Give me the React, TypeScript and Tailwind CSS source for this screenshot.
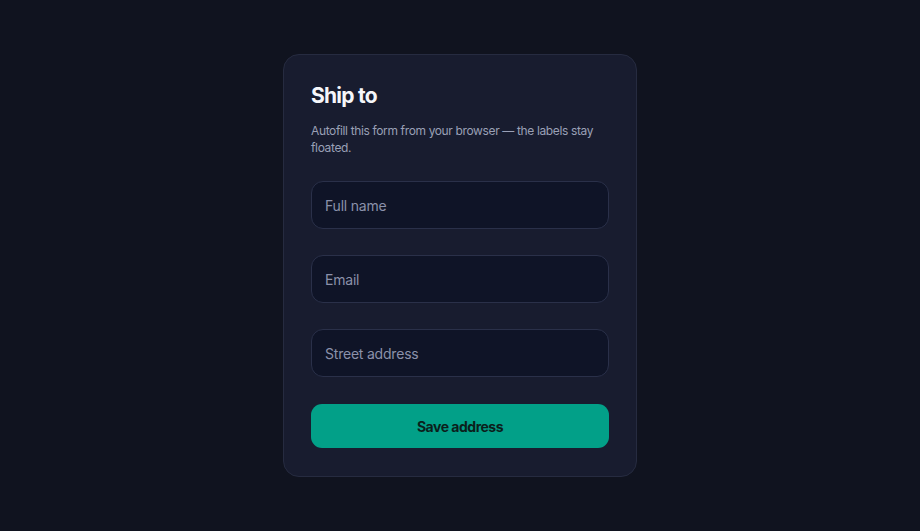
import React from 'react';

const fields = ['Full name', 'Email', 'Street address'];

export default function App() {
  return (
    <div
      className="min-h-screen w-full bg-[#10131f] flex justify-center pt-[54px]"
      style={{ fontFamily: 'Inter, "Noto Sans", sans-serif' }}
    >
      <div className="w-[354px] h-[423px] rounded-[16px] border border-[#262b40] bg-[#181c2f] px-[27px] pt-[26px]">
        <h1 className="text-[21px] leading-[30px] font-bold tracking-[-0.035em] text-[#f5f6fa]">Ship to</h1>
        <p className="mt-[11px] text-[12px] leading-[17px] tracking-[-0.03em] text-[#9aa0b6]">
          Autofill this form from your browser — the labels stay floated.
        </p>
        <form className="mt-[25px] flex flex-col gap-[26px]" onSubmit={(e) => e.preventDefault()}>
          {fields.map((f) => (
            <div
              key={f}
              className="h-[48px] rounded-[12px] border border-[#2a3049] bg-[#0f1427] flex items-center px-[13px]"
            >
              <span className="text-[14px] tracking-[-0.015em] text-[#8b91aa]">{f}</span>
            </div>
          ))}
          <button
            type="submit"
            className="mt-px h-[44px] rounded-[11px] bg-[#02a088] text-[14px] font-bold tracking-[-0.035em] text-[#0b1f1c]"
          >
            Save address
          </button>
        </form>
      </div>
    </div>
  );
}
